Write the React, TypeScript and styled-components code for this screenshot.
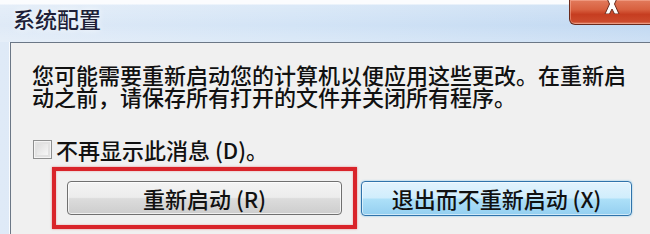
import styled, { createGlobalStyle } from 'styled-components'

const GlobalStyle = createGlobalStyle`
    html, body {
        margin: 0;
        padding: 0;
        background: #ffffff;
    }
    body {
        font-family: "Noto Sans CJK SC", "Noto Sans", sans-serif;
    }
`

const Window = styled.div`
    width: 650px;
    height: 234px;
    overflow: hidden;
    display: flex;
    flex-direction: column;
    background: linear-gradient(90deg, #dfeaf7 0%, #d3e4f6 45%, #c2d9f2 100%);
`

const TitleBar = styled.div`
    height: 42px;
    flex-shrink: 0;
    display: flex;
    justify-content: space-between;
    align-items: flex-start;
    padding-left: 13px;
    background: linear-gradient(180deg, #fbfcfe 0px, #fbfcfe 4px, rgba(255, 255, 255, 0) 5px),
        linear-gradient(180deg, rgba(255, 255, 255, 0.25) 0%, rgba(255, 255, 255, 0) 60%, rgba(255, 255, 255, 0.2) 100%);
`

const Title = styled.div`
    padding-top: 7px;
    font-size: 22px;
    line-height: 22px;
    font-weight: 500;
    color: #1e1f38;
    text-shadow: 0 0 6px rgba(255, 255, 255, 0.9);
`

const CloseButton = styled.div`
    width: 86px;
    height: 25px;
    margin-right: -5px;
    box-sizing: border-box;
    display: flex;
    justify-content: center;
    align-items: flex-end;
    padding-bottom: 10px;
    border: 1px solid #6a2a1c;
    border-top: none;
    border-radius: 0 0 6px 6px;
    background: linear-gradient(180deg, #e27a5c 0%, #d8603f 40%, #c63d20 60%, #cc4a2c 90%, #e08a70 100%);
    box-shadow: inset 0 0 0 1px rgba(255, 190, 170, 0.45);
`

const Body = styled.div`
    flex: 1;
    display: flex;
    padding-left: 10px;
`

const Panel = styled.div`
    flex: 1;
    background: #f0f0f0;
    border-top: 1px solid #6b7786;
    border-left: 1px solid #6b7786;
    box-shadow: -1px 0 0 rgba(255, 255, 255, 0.85);
    padding: 20px 0 0 21px;
    display: flex;
    flex-direction: column;
    align-items: flex-start;
`

const Message = styled.p`
    margin: 0;
    width: 605px;
    font-size: 22px;
    line-height: 22px;
    font-weight: 500;
    color: #111111;
`

const CheckRow = styled.label`
    margin-top: 31px;
    height: 22px;
    display: flex;
    align-items: center;
    gap: 4px;
    padding-left: 1px;
    font-size: 22px;
    line-height: 22px;
    font-weight: 500;
    color: #111111;
`

const CheckBox = styled.span`
    width: 19px;
    height: 19px;
    box-sizing: border-box;
    border: 1px solid #8e8f8f;
    background: linear-gradient(135deg, #d6d6d6 0%, #f2f2f2 70%, #fbfbfb 100%);
    box-shadow: inset 0 0 0 1px #f4f4f4, inset 0 0 0 3px #e2e2e2;
`

const ButtonRow = styled.div`
    margin-top: 7px;
    margin-left: 20px;
    display: flex;
    align-items: center;
    gap: 4px;
`

const Highlight = styled.div`
    border: 4px solid #d9242a;
    padding: 10px 11px;
    box-shadow: 0 0 2px rgba(217, 36, 42, 0.5), inset 0 0 2px rgba(217, 36, 42, 0.4);
`

const Button = styled.button<{ $focused?: boolean; $width: number; $height: number }>`
    width: ${p => p.$width}px;
    height: ${p => p.$height}px;
    box-sizing: border-box;
    margin: 0;
    padding: 0;
    font-family: "Noto Sans CJK SC", "Noto Sans", sans-serif;
    font-size: 22px;
    line-height: 22px;
    font-weight: 500;
    color: #111111;
    border-radius: 4px;
    border: 1px solid ${p => (p.$focused ? '#2f73ab' : '#707070')};
    background: ${p =>
        p.$focused
            ? 'linear-gradient(180deg, #e2f3fd 0%, #d0edfc 48%, #ade0f8 52%, #94cff0 100%)'
            : 'linear-gradient(180deg, #f4f4f4 0%, #ececec 48%, #dcdcdc 52%, #cdcdcd 100%)'};
    box-shadow: ${p =>
        p.$focused
            ? 'inset 0 0 0 1px rgba(255, 255, 255, 0.55), 0 0 2px rgba(60, 170, 230, 0.7)'
            : 'inset 0 0 0 1px rgba(255, 255, 255, 0.7)'};
`

const CloseGlyph = () => (
    <svg width="18" height="20" viewBox="0 0 18 20">
        <path
            d="M2 0 L6.5 0 L9 5 L11.5 0 L16 0 L11.5 10 L16 20 L11.5 20 L9 15 L6.5 20 L2 20 L6.5 10 Z"
            fill="#ffffff"
            stroke="#6b2b1d"
            strokeWidth="1"
            strokeLinejoin="round"
        />
    </svg>
)

export default function App() {
    return (
        <>
            <GlobalStyle />
            <Window>
                <TitleBar>
                    <Title>系统配置</Title>
                    <CloseButton>
                        <CloseGlyph />
                    </CloseButton>
                </TitleBar>
                <Body>
                    <Panel>
                        <Message>
                            您可能需要重新启动您的计算机以便应用这些更改。在重新启动之前，请保存所有打开的文件并关闭所有程序。
                        </Message>
                        <CheckRow>
                            <CheckBox />
                            不再显示此消息 (D)。
                        </CheckRow>
                        <ButtonRow>
                            <Highlight>
                                <Button $width={275} $height={34}>重新启动 (R)</Button>
                            </Highlight>
                            <Button $focused $width={271} $height={35}>退出而不重新启动 (X)</Button>
                        </ButtonRow>
                    </Panel>
                </Body>
            </Window>
        </>
    )
}
